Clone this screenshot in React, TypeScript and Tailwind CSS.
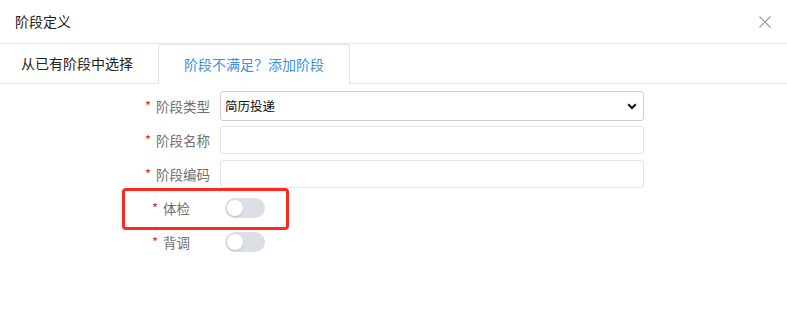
import React from "react";

const font = { fontFamily: '"Noto Sans CJK SC", "Noto Sans", sans-serif' };

function Label({ text, width }: { text: string; width: string }) {
  return (
    <div className={`${width} shrink-0 flex items-center justify-end text-[13.5px] text-[#707070]`}>
      <span className="text-[#f5222d] mr-[5px] text-[13px] leading-none relative top-[-1px]">*</span>
      <span>{text}</span>
    </div>
  );
}

function Switch() {
  return (
    <div className="w-[40px] h-[20px] rounded-full bg-[#dcdfe6] flex items-center px-[2px]">
      <div className="w-[16px] h-[16px] rounded-full bg-white shadow-[0_1px_2px_rgba(0,0,0,0.15)]" />
    </div>
  );
}

export default function App() {
  return (
    <div className="w-[787px] h-[335px] bg-white relative" style={font}>
      {/* header */}
      <div className="h-[44px] border-b border-[#e8e8e8] flex items-center justify-between pl-[15px] pr-[15px]">
        <span className="text-[14px] text-[#222]">阶段定义</span>
        <svg width="14" height="14" viewBox="0 0 14 14">
          <path d="M1.5 1.5 L12.5 12.5 M12.5 1.5 L1.5 12.5" stroke="#999" strokeWidth="1.2" fill="none" />
        </svg>
      </div>
      {/* tabs */}
      <div className="h-[40px] flex border-b border-[#e4e4e4]">
        <div className="w-[158px] flex items-center justify-start pl-[21px] text-[14px] text-[#222]">从已有阶段中选择</div>
        <div className="w-[192px] -mb-px bg-white border border-b-0 border-[#e4e4e4] rounded-t-[4px] flex items-center justify-center text-[14px] text-[#3b8fe8]">
          阶段不满足？添加阶段
        </div>
      </div>
      {/* form */}
      <div className="pt-[5px] flex flex-col">
        <div className="h-[34px] flex items-center">
          <Label text="阶段类型" width="w-[210px]" />
          <div className="ml-[10px] w-[424px] h-[30px] border border-[#cdcdcd] rounded-[3px] flex items-center justify-between pl-[4px] pr-[6px] text-[12.5px] text-[#111]">
            <span>简历投递</span>
            <svg width="10" height="7" viewBox="0 0 10 7">
              <path d="M1.2 1.2 L5 5 L8.8 1.2" stroke="#111" strokeWidth="2" fill="none" />
            </svg>
          </div>
        </div>
        <div className="h-[34px] flex items-center">
          <Label text="阶段名称" width="w-[210px]" />
          <div className="ml-[10px] w-[424px] h-[28px] border border-[#e0e3ea] rounded-[3px]" />
        </div>
        <div className="h-[34px] flex items-center">
          <Label text="阶段编码" width="w-[210px]" />
          <div className="ml-[10px] w-[424px] h-[28px] border border-[#e0e3ea] rounded-[3px]" />
        </div>
        <div className="h-[34px] flex items-center">
          <Label text="体检" width="w-[190px]" />
          <div className="ml-[35px]">
            <Switch />
          </div>
        </div>
        <div className="h-[34px] flex items-center">
          <Label text="背调" width="w-[190px]" />
          <div className="ml-[35px]">
            <Switch />
          </div>
        </div>
      </div>
      {/* annotation box */}
      <div className="absolute left-[122px] top-[188px] w-[167px] h-[42px] border-[3px] border-[#ff2a1f] rounded-[4px]" />
    </div>
  );
}
